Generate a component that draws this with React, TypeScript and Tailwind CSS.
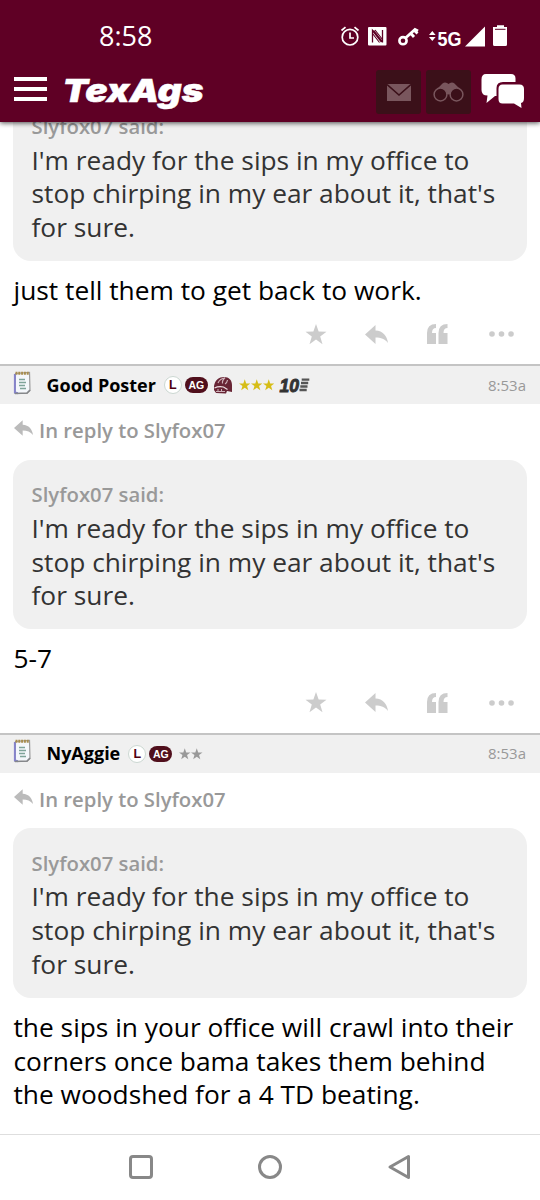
import type { ReactNode } from "react";

const QUOTE_LINES = [
  "I'm ready for the sips in my office to",
  "stop chirping in my ear about it, that's",
  "for sure.",
];

const STAR = "M10 0l2.5 7.2 7.5.1-6 4.6 2.2 7.3L10 14.8l-6.2 4.4L6 11.9 0 7.3l7.5-.1z";
const REPLY = "M0 9.5L10.5 0v5.500C18 6 22 10.500 23 18c-3-4-7-5.500-12.500-5.500V19z";

function StatusIcons() {
  return (
    <svg width="180" height="30" viewBox="335 22 180 30" fill="#fff">
      <circle cx="350" cy="37.2" r="7.8" fill="none" stroke="#fff" strokeWidth="1.7" />
      <path d="M350 32.5v5.500h4M341.500 30.500l4-3.300M358.500 30.500l-4-3.300" fill="none" stroke="#fff" strokeWidth="1.7" />
      <rect x="368" y="27" width="18.5" height="18.5" rx="1" />
      <path d="M372.5 42.500V30.500l9 11.500M382.500 30v12.500M382.500 42l-9-11.500" fill="none" stroke="#5f0025" strokeWidth="1.3" />
      <path d="M375 30l7.500 9.500M372.500 33.500l7 9" fill="none" stroke="#5f0025" strokeWidth="1.1" />
      <circle cx="403" cy="40.7" r="3.6" fill="none" stroke="#fff" strokeWidth="2.6" />
      <path d="M405.500 38l9.500-8.500 3 1.500M410.500 33l3.500 4M414 30l3.500 3.500" fill="none" stroke="#fff" strokeWidth="2.8" />
      <path d="M429 35l3.300-4 3.300 4zM429 37l3.300 4 3.300-4z" />
      <text x="437.5" y="46" fontSize="21" fontWeight="700" fontFamily="Liberation Sans, sans-serif" textLength="24" lengthAdjust="spacingAndGlyphs">
        5G
      </text>
      <path d="M485 26.500v20h-20z" />
      <path d="M497 27v-1.700h7V27h3v17.500q0 1.500-1.500 1.500h-11q-1.500 0-1.500-1.500V27z" />
      <path d="M495 29.300h10.500" stroke="#5f0025" strokeWidth="1" />
    </svg>
  );
}

function TopBar() {
  return (
    <header className="relative z-10 flex h-[122px] shrink-0 flex-col bg-[#5f0025] shadow-[0_1px_5px_rgba(0,0,0,0.7)]">
      <div className="flex h-[62px] justify-between pl-[99px] pr-[25px] text-white">
        <span className="pt-[20px] font-['Open_Sans',sans-serif] text-[27px] leading-[32px]">8:58</span>
        <div className="pt-[22px]">
          <StatusIcons />
        </div>
      </div>
      <div className="flex h-[60px] items-start pl-[14px]">
        <div className="flex w-[33px] flex-col gap-[6px] pt-[15px]">
          <span className="h-[4px] bg-white" />
          <span className="h-[4px] bg-white" />
          <span className="h-[4px] bg-white" />
        </div>
        <svg className="ml-[16px] mt-[8px]" width="146" height="44" viewBox="63 70 146 44">
          <text x="62.5" y="102" fill="#fff" stroke="#fff" strokeWidth=".5" fontSize="32" fontWeight="900" fontStyle="italic" fontFamily="Inter, sans-serif" textLength="141" lengthAdjust="spacingAndGlyphs">
            TexAgs
          </text>
        </svg>
        <div className="ml-auto flex gap-[5px] pr-[14px] pt-[8px]">
          <div className="flex h-[44px] w-[45px] items-center justify-center rounded-[3px] bg-[#3b1019]">
            <svg width="24" height="17" viewBox="0 0 24 17">
              <rect width="24" height="17" fill="#79565d" />
              <path d="M0 .5l12 10.500L24 .5" fill="none" stroke="#3b1019" strokeWidth="1.6" />
            </svg>
          </div>
          <div className="flex h-[44px] w-[45px] items-center justify-center rounded-[3px] bg-[#3b1019]">
            <svg width="31" height="20" viewBox="0 0 31 20">
              <path d="M2 9L9.500 1.500q2-1.500 4.500-.5l1.500 1 1.500-1q2.500-1 4.500.5L29 9l-9 2-4.500 1.500L11 11z" fill="#79565d" />
              <circle cx="7.5" cy="12.5" r="6.4" fill="#3b1019" stroke="#79565d" strokeWidth="1.5" />
              <circle cx="23.5" cy="12.5" r="6.4" fill="#3b1019" stroke="#79565d" strokeWidth="1.5" />
            </svg>
          </div>
          <svg className="ml-[4px] mt-[2px]" width="46" height="38" viewBox="480 72 46 38" fill="#fff">
            <path d="M486 74h25q4.500 0 4.500 4.500V82H503q-6.500 0-6.500 6v8h-1.500l-8.500 7 1-7.500q-6 0-6-5.500V79.500q0-5.500 4.500-5.500z" />
            <path d="M502.500 84.500h17q4.500 0 4.500 4.500v9q0 4.500-3 5l.5 5-7.500-4.500h-11.500q-4 0-4-4.500V89q0-4.500 4-4.500z" />
          </svg>
        </div>
      </div>
    </header>
  );
}

function Notepad() {
  return (
    <svg width="20" height="26" viewBox="0 0 20 26">
      <path d="M2.500 3.500l14-1 .5 18-3 3H2z" fill="#f4f7fb" stroke="#9b9b9b" strokeWidth="1.2" />
      <path d="M1.900 4v18.500l3 .7" fill="none" stroke="#8583cb" strokeWidth="2" />
      <path d="M2 23.500l12-.5 3-3" fill="none" stroke="#85878a" strokeWidth="1.5" />
      <path d="M2.500 3.200h14" stroke="#a88d50" strokeWidth="3" strokeDasharray="2 .8" />
      <path d="M6 9.500h6M6 12.500h7M6 15.500h6M7 18.500h6" stroke="#7fa49a" strokeWidth="1.5" />
    </svg>
  );
}

function Badges() {
  return (
    <>
      <span className="flex h-[18px] w-[18px] items-center justify-center rounded-full border border-[#ccd8d2] bg-white font-['Liberation_Sans',sans-serif] text-[12.5px] font-bold leading-none text-[#500010]">
        L
      </span>
      <span className="ml-[3px] flex h-[16px] w-[23px] items-center justify-center rounded-full bg-[#500f1c] font-['Liberation_Sans',sans-serif] text-[10.5px] font-bold leading-none text-white">
        AG
      </span>
    </>
  );
}

function Stars({ count, color }: { count: number; color: string }) {
  return (
    <span className="flex gap-[0.5px]">
      {Array.from({ length: count }, (_, i) => (
        <svg key={i} width="11.5" height="12" viewBox="0 0 20 20" fill={color}>
          <path d={STAR} />
        </svg>
      ))}
    </span>
  );
}

function Helmet() {
  return (
    <svg className="ml-[5px]" width="20" height="18" viewBox="0 0 20 18">
      <path d="M1 10C2 4 6 1 11 1c5 0 8 3 8 8v7l-5-1-1 2.500-10-.5L1 14z" fill="#682535" />
      <path d="M5 7q2-4.500 7-5-3 2-2.500 5.500M12 8q2-1 2.500-4" fill="none" stroke="#cdb0b8" strokeWidth="1.2" />
      <path d="M1.500 12q4-2 9-1l4 2.500" fill="none" stroke="#eee1e4" strokeWidth="1.2" />
      <path d="M3 15.500h9M5 13v3M8.500 13v3" stroke="#cdb0b8" strokeWidth="1" />
    </svg>
  );
}

function TenYears() {
  return (
    <svg className="ml-[5px]" width="33" height="22" viewBox="-1 -3 33 22">
      <text x="-0.5" y="14.6" fill="#333" stroke="#333" strokeWidth=".9" fontSize="18" fontWeight="700" fontStyle="italic" fontFamily="Liberation Sans, sans-serif" textLength="19.5" lengthAdjust="spacingAndGlyphs">
        10
      </text>
      <path d="M21.700 2.600h7.600M21 6h7.200M20.300 9.500h7.200M19.500 13h7.200" stroke="#555" strokeWidth="2.3" />
    </svg>
  );
}

function PostHeader({ name, children }: { name: string; children: ReactNode }) {
  return (
    <div className="flex h-[40px] items-center border-t-2 border-[#c4c4c4] bg-[#f0f0f0] pl-[13px] pr-[14px]">
      <div className="-mt-[5px]">
        <Notepad />
      </div>
      <span className="ml-[13.5px] mr-[8px] text-[18px] font-bold text-black">{name}</span>
      {children}
      <span className="ml-auto pb-px text-[15px] text-[#999]">8:53a</span>
    </div>
  );
}

function ReplyLine() {
  return (
    <div className="flex h-[55.5px] items-center pb-[4px] pl-[14px] text-[20.3px] font-semibold text-[#999]">
      <svg className="-mt-[4px] mr-[6px]" width="19" height="16" viewBox="0 0 23 19" fill="#bbb">
        <path d={REPLY} />
      </svg>
      In reply to Slyfox07
    </div>
  );
}

function Lines({ lines, color }: { lines: string[]; color: string }) {
  return (
    <div className={color}>
      {lines.map((line) => (
        <p key={line} className="whitespace-nowrap text-[26.3px] leading-[33.6px]">
          {line}
        </p>
      ))}
    </div>
  );
}

function Quote() {
  return (
    <div className="mx-[13px] h-[169.5px] rounded-[18px] bg-[#f0f0f0] pl-[18.5px] pt-[22.5px]">
      <div className="mb-[4.5px] text-[20.3px] font-semibold leading-[25px] text-[#999]">Slyfox07 said:</div>
      <Lines lines={QUOTE_LINES} color="text-[#333]" />
    </div>
  );
}

function Body({ lines }: { lines: string[] }) {
  return (
    <div className="pl-[13.5px] pt-[13px]">
      <Lines lines={lines} color="text-black" />
    </div>
  );
}

function Actions() {
  return (
    <div className="flex h-[56.9px] items-center pb-[4px] pl-[305px]">
      <svg width="22" height="21" viewBox="0 0 20 20" fill="#ccc">
        <path d={STAR} />
      </svg>
      <svg className="ml-[38px]" width="23" height="19" viewBox="0 0 23 19" fill="#ccc">
        <path d={REPLY} />
      </svg>
      <svg className="ml-[39px]" width="21" height="20" viewBox="0 0 21 20" fill="#ccc">
        <path d="M9 0v4q-4 0-4 5h4v11H0V9Q0 0 9 0zM20.500 0v4q-4 0-4 5h4v11h-9V9q0-9 9-9z" />
      </svg>
      <svg className="ml-[41px]" width="25" height="6" viewBox="0 0 25 6" fill="#ccc">
        <circle cx="3" cy="3" r="2.8" />
        <circle cx="12.5" cy="3" r="2.8" />
        <circle cx="22" cy="3" r="2.8" />
      </svg>
    </div>
  );
}

function NavBar() {
  return (
    <nav className="h-[66px] shrink-0 border-t border-[#dedede] bg-white">
      <svg width="540" height="65" viewBox="0 1135 540 65" fill="none" stroke="#888" strokeWidth="3">
        <rect x="130.5" y="1156.5" width="21" height="21" rx="2.5" />
        <circle cx="270" cy="1167" r="10.5" />
        <path d="M408.500 1156.500v21l-18.500-10.500z" strokeLinejoin="round" />
      </svg>
    </nav>
  );
}

export default function App() {
  return (
    <div className="flex h-[1200px] w-[540px] flex-col overflow-hidden bg-white font-['Open_Sans',sans-serif]">
      <TopBar />
      <main className="min-h-0 flex-1 overflow-hidden">
        <article className="-mt-[30.5px]">
          <Quote />
          <Body lines={["just tell them to get back to work."]} />
          <Actions />
        </article>
        <article>
          <PostHeader name="Good Poster">
            <Badges />
            <Helmet />
            <span className="ml-[6px]">
              <Stars count={3} color="#d6bd16" />
            </span>
            <TenYears />
          </PostHeader>
          <ReplyLine />
          <Quote />
          <Body lines={["5-7"]} />
          <Actions />
        </article>
        <article>
          <PostHeader name="NyAggie">
            <Badges />
            <span className="ml-[7px]">
              <Stars count={2} color="#999" />
            </span>
          </PostHeader>
          <ReplyLine />
          <Quote />
          <Body
            lines={[
              "the sips in your office will crawl into their",
              "corners once bama takes them behind",
              "the woodshed for a 4 TD beating.",
            ]}
          />
        </article>
      </main>
      <NavBar />
    </div>
  );
}
